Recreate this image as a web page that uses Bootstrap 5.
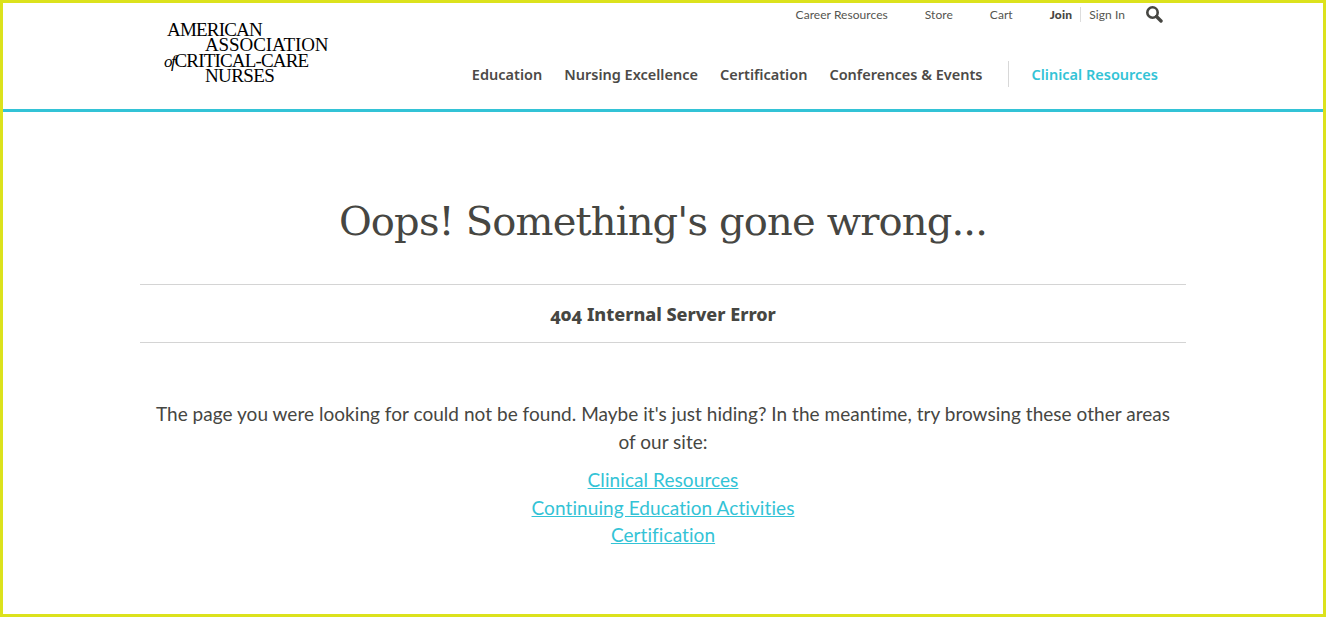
<!DOCTYPE html>
<html lang="en"><head><meta charset="utf-8"><title>404</title>
<link href="https://cdn.jsdelivr.net/npm/bootstrap@5.3.0/dist/css/bootstrap.min.css" rel="stylesheet">
<style>
html,body{height:617px;overflow:hidden;background:#fff}
.frame{height:617px;border:3px solid #dce21c;color:#464642;font-family:"Lato",sans-serif}
.site-head{height:106px;border-bottom:3px solid #33c3d6;box-sizing:content-box;padding:0 160px 0 161px}
.brand-logo{font-family:"Liberation Serif",serif;font-size:19px;color:#000;padding-top:19px;width:170px;text-transform:uppercase}
.brand-logo div{white-space:nowrap;height:15.3px;line-height:15.3px}
.brand-logo .l1{padding-left:3px;letter-spacing:-.8px}.brand-logo .l2{padding-left:41px;letter-spacing:-.1px}.brand-logo .l3{letter-spacing:-.82px}.brand-logo .l4{padding-left:41px;letter-spacing:-.63px}
.brand-logo i{font-size:17px;line-height:0;text-transform:none;letter-spacing:-1.4px;margin-right:0}
.util{font-size:12px;line-height:15px;padding-top:4px;color:#55554f;letter-spacing:.05px;height:58px}
.util a{color:inherit;text-decoration:none}
.util a.join{font-weight:900;color:#464642;letter-spacing:.2px}
.util .sep{border-left:1px solid #ddd;height:15px;margin:0 8px}
.mainnav{font-family:"Noto Sans",sans-serif;font-size:14.5px;font-weight:600;line-height:26px}
.mainnav a{color:#4c4a47;text-decoration:none;white-space:nowrap}
.mainnav .vr-line{border-left:1px solid #d8d8d8;height:26px}
.mainnav a.act{color:#33c3d6;margin-right:5px}
.err-wrap{width:1046px;margin:0 auto;text-align:center}
.err-title{font-family:"DejaVu Serif",serif;font-size:40px;line-height:50px;font-weight:400;color:#464642;margin:84px 0 38px;letter-spacing:-.83px}
.err-code{border-top:1px solid #d4d4d4;border-bottom:1px solid #d4d4d4;height:59px;line-height:59px;font-family:"Noto Sans",sans-serif;font-weight:800;font-size:18px;margin-bottom:57px;font-variant-numeric:oldstyle-nums}
.err-text{font-size:19px;line-height:27.5px;margin:0 0 11px;padding:0 15px;letter-spacing:.035px}
.err-links a{display:block;color:#33c3d6;font-size:19px;line-height:27.5px;letter-spacing:.08px}
</style></head><body>
<div class="frame">
<header class="site-head d-flex justify-content-between">
<div class="brand-logo"><div class="l1">American</div><div class="l2">Association</div><div class="l3"><i>of</i>Critical-Care</div><div class="l4">Nurses</div></div>
<div class="d-flex flex-column align-items-end">
<div class="util d-flex align-items-start">
<a href="#" style="margin-right:37px">Career Resources</a><a href="#" style="margin-right:37px">Store</a><a href="#" style="margin-right:37px">Cart</a><a href="#" class="join">Join</a><span class="sep"></span><a href="#">Sign In</a>
<svg width="18" height="18" viewBox="0 0 18 18" fill="none" stroke="#464642" style="margin-top:-2px;margin-left:20px"><circle cx="7.5" cy="7.5" r="5.2" stroke-width="2.6"/><path d="M11.5 11.5 16 16" stroke-width="3.4" stroke-linecap="round"/></svg>
</div>
<nav class="mainnav d-flex align-items-center">
<a href="#" style="margin-right:22px">Education</a><a href="#" style="margin-right:22px">Nursing Excellence</a><a href="#" style="margin-right:22px">Certification</a><a href="#" style="margin-right:26px">Conferences &amp; Events</a><span class="vr-line" style="margin-right:22px"></span><a href="#" class="act">Clinical Resources</a>
</nav>
</div>
</header>
<main class="err-wrap">
<h1 class="err-title">Oops! Something's gone wrong...</h1>
<div class="err-code">404 Internal Server Error</div>
<p class="err-text">The page you were looking for could not be found. Maybe it's just hiding? In the meantime, try browsing these other areas of our site:</p>
<div class="err-links"><a href="#">Clinical Resources</a><a href="#">Continuing Education Activities</a><a href="#">Certification</a></div>
</main>
</div>
<script src="https://cdn.jsdelivr.net/npm/bootstrap@5.3.0/dist/js/bootstrap.bundle.min.js"></script>
</body></html>
